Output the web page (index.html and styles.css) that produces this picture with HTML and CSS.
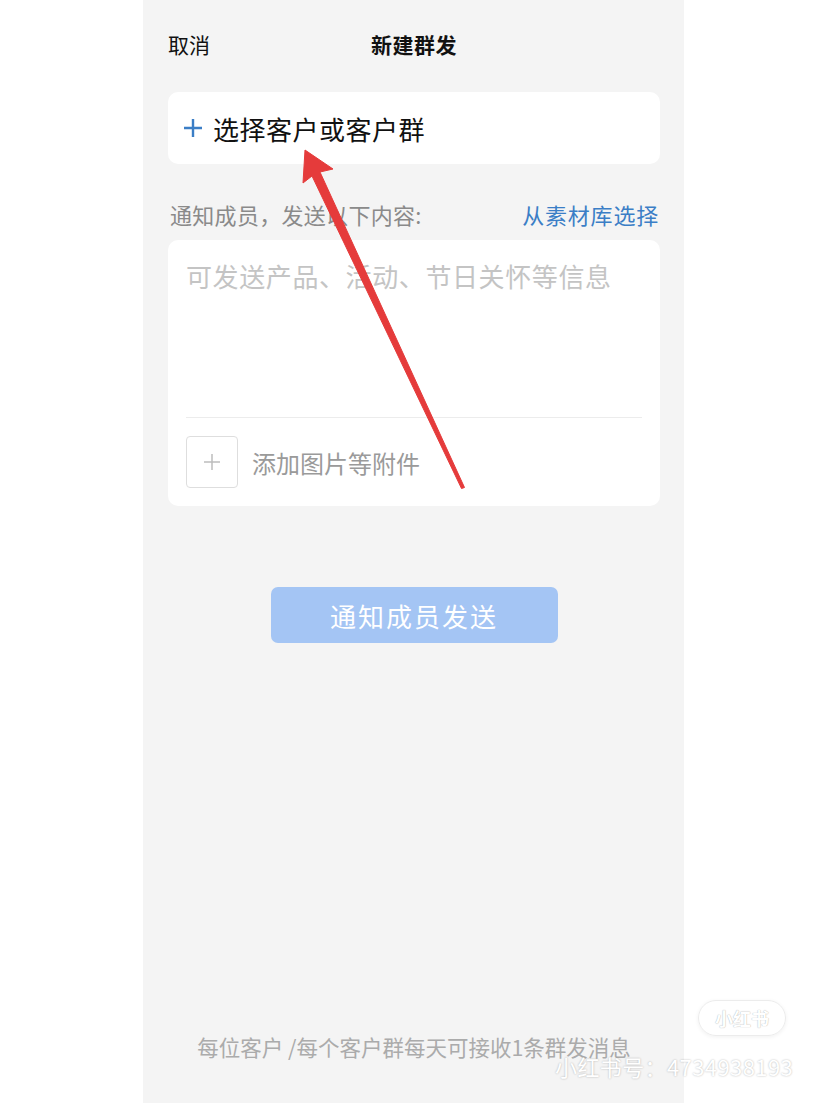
FILE: index.html
```html
<!DOCTYPE html>
<html lang="zh-CN">
<head>
    <meta charset="UTF-8">
    <meta name="viewport" content="width=device-width, initial-scale=1.0">
    <title>新建群发</title>
    <link rel="stylesheet" href="styles.css">
</head>
<body>
    <div class="screen">
        <div class="nav">
            <span class="nav-cancel">取消</span>
            <span class="nav-title">新建群发</span>
        </div>

        <div class="card pick">
            <svg class="pick-plus" width="20" height="20" viewBox="0 0 20 20">
                <path d="M10 1v18M1 10h18" stroke="#3b7ec6" stroke-width="2.4" fill="none"/>
            </svg>
            <span>选择客户或客户群</span>
        </div>

        <div class="label-row">
            <span class="label">通知成员，发送以下内容:</span>
            <span class="link">从素材库选择</span>
        </div>

        <div class="card editor">
            <div class="placeholder">可发送产品、活动、节日关怀等信息</div>
            <div class="attach">
                <div class="attach-box">
                    <svg width="20" height="20" viewBox="0 0 20 20">
                        <path d="M10 2v16M2 10h16" stroke="#bdbdbd" stroke-width="1.5" fill="none"/>
                    </svg>
                </div>
                <span class="attach-text">添加图片等附件</span>
            </div>
        </div>

        <button class="send" type="button">通知成员发送</button>

        <p class="tip">每位客户 /每个客户群每天可接收1条群发消息</p>
    </div>

    <!-- red pointer drawn over the form -->
    <svg class="pointer" width="827" height="1103" viewBox="0 0 827 1103">
        <polygon points="305,150 333,169 320,172 464.5,487.5 461.5,488.5 312,176 303,183" fill="#e53b3b" stroke="#e53b3b" stroke-width="1" stroke-linejoin="round"/>
    </svg>

    <div class="mark-logo">小红书</div>
    <div class="mark-id">小红书号：4734938193</div>
</body>
</html>
```

FILE: styles.css
```css
* {
    box-sizing: border-box;
}
body {
    margin: 0;
    background: #ffffff;
    font-family: "Noto Sans CJK SC", "Noto Sans", sans-serif;
    height: 1103px;
    overflow: hidden;
    position: relative;
}
.screen {
    margin-left: 143px;
    width: 541px;
    height: 1103px;
    background: #f4f4f4;
    display: flex;
    flex-direction: column;
    padding: 0 24px 0 25px;
}
.nav {
    height: 88px;
    display: flex;
    align-items: center;
    position: relative;
    font-size: 21px;
    color: #111;
}
.nav-title {
    position: absolute;
    left: 0;
    right: 0;
    text-align: center;
    font-weight: 700;
    font-size: 21px;
    letter-spacing: 0.5px;
}
.nav-cancel {
    position: relative;
    z-index: 1;
}
.card {
    background: #ffffff;
    border-radius: 10px;
}
.pick {
    margin-top: 4px;
    height: 72px;
    display: flex;
    align-items: center;
    padding-left: 15px;
    gap: 10px;
    font-size: 26px;
    letter-spacing: 0.5px;
    color: #111;
}
.label-row {
    display: flex;
    justify-content: space-between;
    align-items: center;
    height: 76px;
    padding-top: 24px;
    font-size: 22px;
}
.label {
    color: #8a8a8a;
    padding-left: 2px;
    letter-spacing: 0.3px;
}
.link {
    color: #3b7ec6;
    font-size: 22px;
    letter-spacing: 0.8px;
    padding-right: 1px;
}
.editor {
    height: 266px;
    padding: 18px 18px 0;
    display: flex;
    flex-direction: column;
}
.placeholder {
    font-size: 26px;
    letter-spacing: 0.6px;
    color: #c4c4c4;
    line-height: 36px;
    height: 160px;
    border-bottom: 1px solid #ececec;
}
.attach {
    display: flex;
    align-items: center;
    gap: 14px;
    padding-top: 18px;
}
.attach-box {
    width: 52px;
    height: 52px;
    border: 1px solid #dedede;
    border-radius: 4px;
    display: flex;
    align-items: center;
    justify-content: center;
}
.attach-text {
    font-size: 24px;
    color: #9a9a9a;
}
.send {
    margin: 81px auto 0;
    width: 287px;
    height: 56px;
    border: none;
    border-radius: 7px;
    background: #a4c5f4;
    color: #ffffff;
    font-family: inherit;
    font-size: 26px;
    letter-spacing: 2px;
    padding: 0;
}
.tip {
    margin: auto 0 0;
    padding-bottom: 41px;
    text-align: center;
    font-size: 21.5px;
    line-height: 30px;
    color: #ababab;
}
.pointer {
    position: absolute;
    left: 0;
    top: 0;
    pointer-events: none;
}
.mark-logo {
    position: absolute;
    left: 698px;
    top: 1000px;
    width: 88px;
    height: 36px;
    border-radius: 18px;
    border: 1px solid #ececec;
    box-shadow: 0 1px 4px rgba(0, 0, 0, 0.06);
    color: #ffffff;
    font-size: 18px;
    font-weight: 700;
    text-align: center;
    line-height: 34px;
    text-shadow: 0 0 1px rgba(0, 0, 0, 0.4);
}
.mark-id {
    position: absolute;
    left: 555px;
    top: 1050px;
    font-size: 22px;
    letter-spacing: 0.4px;
    line-height: 32px;
    color: #ffffff;
    text-shadow: 0 0 2px rgba(0, 0, 0, 0.3);
}
```
